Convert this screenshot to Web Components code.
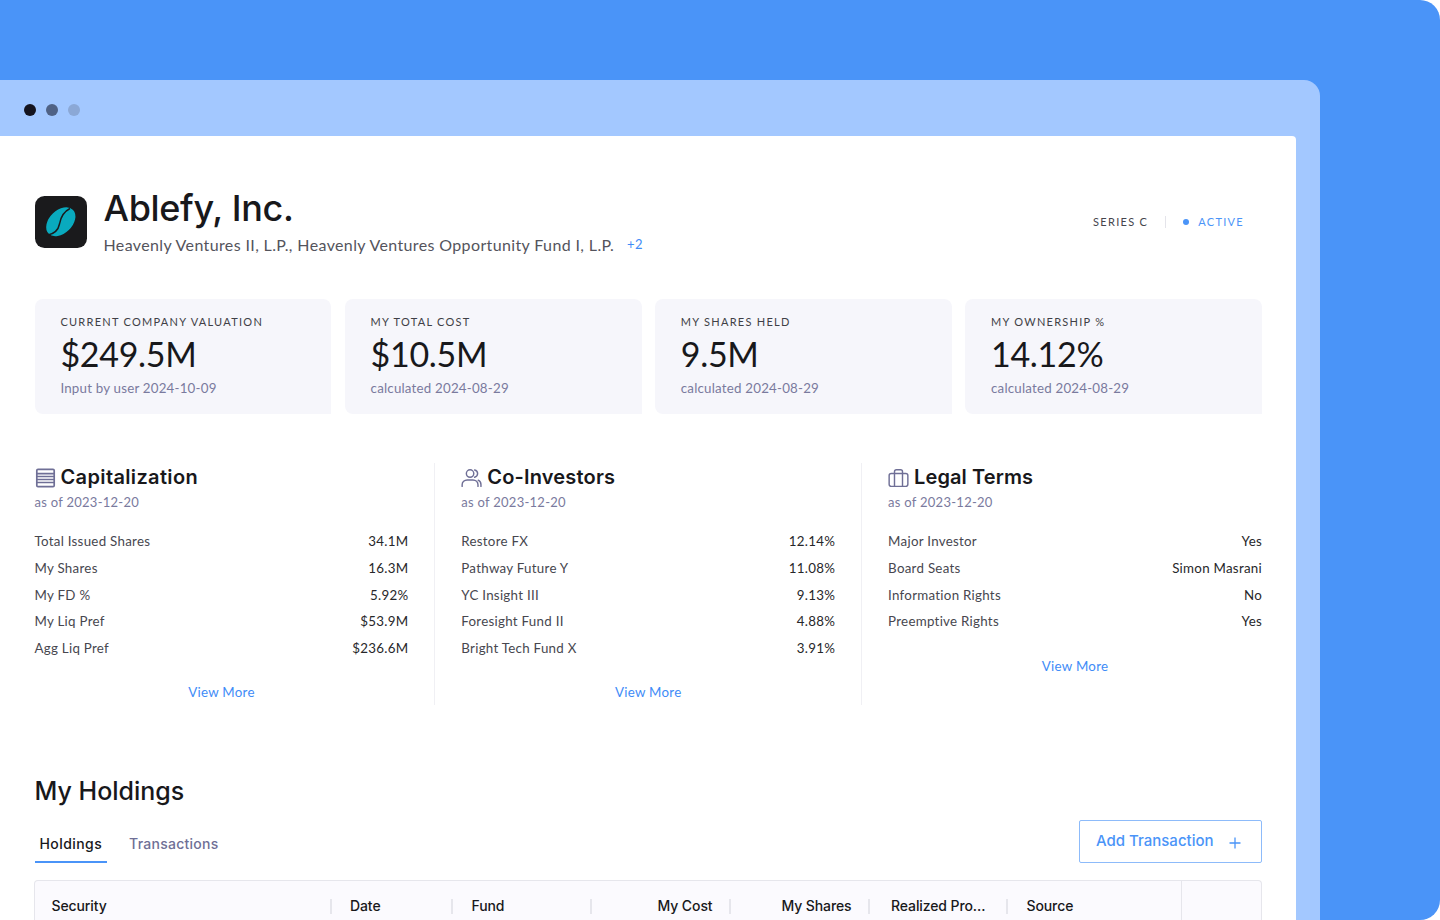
<!DOCTYPE html>
<html lang="en"><head><meta charset="utf-8"><title>Ablefy, Inc.</title>
<style>
html,body{margin:0;padding:0;background:#fff;height:920px;overflow:hidden}
body{font-family:"Lato",sans-serif;color:#18181b}
</style></head><body>
<app-backdrop>
  <window-frame>
    <company-header name="Ablefy, Inc." funds="Heavenly Ventures II, L.P., Heavenly Ventures Opportunity Fund I, L.P." more="+2" series="SERIES C" status="ACTIVE"></company-header>
    <stat-row>
      <stat-card label="CURRENT COMPANY VALUATION" value="$249.5M" note="Input by user 2024-10-09"></stat-card>
      <stat-card label="MY TOTAL COST" value="$10.5M" note="calculated 2024-08-29"></stat-card>
      <stat-card label="MY SHARES HELD" value="9.5M" note="calculated 2024-08-29"></stat-card>
      <stat-card label="MY OWNERSHIP %" value="14.12%" note="calculated 2024-08-29"></stat-card>
    </stat-row>
    <summary-row>
      <summary-panel title="Capitalization" ls=".36" icon="table" rows='[["Total Issued Shares","34.1M"],["My Shares","16.3M"],["My FD %","5.92%"],["My Liq Pref","$53.9M"],["Agg Liq Pref","$236.6M"]]'></summary-panel>
      <summary-panel title="Co-Investors" ls=".17" icon="users" rows='[["Restore FX","12.14%"],["Pathway Future Y","11.08%"],["YC Insight III","9.13%"],["Foresight Fund II","4.88%"],["Bright Tech Fund X","3.91%"]]'></summary-panel>
      <summary-panel title="Legal Terms" ls=".09" icon="case" rows='[["Major Investor","Yes"],["Board Seats","Simon Masrani"],["Information Rights","No"],["Preemptive Rights","Yes"]]'></summary-panel>
    </summary-row>
    <holdings-section></holdings-section>
  </window-frame>
</app-backdrop>
<script>
function def(name, css, html){
  customElements.define(name, class extends HTMLElement{
    constructor(){super();this.attachShadow({mode:'open'});}
    connectedCallback(){
      const a=n=>this.getAttribute(n)||'';
      this.shadowRoot.innerHTML='<style>'+css+'</style>'+(typeof html==='function'?html(a):html);
    }
  });
}
def('app-backdrop',`:host{display:block;width:1440px;height:920px;background:#4A94F8;border-radius:0 20px 20px 0;overflow:hidden;padding-top:80px;box-sizing:border-box}`,`<slot></slot>`);
def('window-frame',`
:host{display:flex;flex-direction:column;width:1320px;height:840px;background:#A3C8FF;border-radius:0 16px 0 0;box-sizing:border-box;overflow:hidden}
.bar{flex:none;height:56px;box-sizing:border-box;padding:4px 0 0 24px;display:flex;align-items:center;gap:10px}
.bar i{width:12px;height:12px;border-radius:50%}
.sheet{flex:1;width:1296px;box-sizing:border-box;background:#fff;border-radius:0 4px 0 0;padding:0 34px 0 34.5px;overflow:hidden}`,
`<div class="bar"><i style="background:#14141f"></i><i style="background:#4F6285"></i><i style="background:#8BA8D6"></i></div><div class="sheet"><slot></slot></div>`);
def('company-header',`
:host{display:flex;align-items:flex-start;height:163px;padding-top:50px;box-sizing:border-box}
svg{flex:none;width:52px;height:52px;margin-top:10px}
.t{margin-left:17px;flex:1}
h1{margin:0;font:500 36px/44px Inter,sans-serif;color:#18181b;letter-spacing:-.35px}
.s{display:flex;align-items:center;font:400 16px/20px Lato,sans-serif;color:#54545c;margin-top:5px;letter-spacing:.37px}
.s b{font-weight:400;font-size:13px;color:#3F8CF7;margin-left:13px;margin-top:-3px}
.tags{display:flex;align-items:center;font:400 11px/14px Lato,sans-serif;letter-spacing:1.3px;margin:29px 18px 0 0;color:#45454d}
.tags u{text-decoration:none;width:1px;height:12px;background:#e4e4ea;margin:0 17px 0 17px}
.tags i{width:6px;height:6px;border-radius:50%;background:#4A94F8;margin-right:9px}
.tags span.a{color:#4A94F8}`,
a=>`<svg viewBox="0 0 52 52"><rect width="52" height="52" rx="9.5" fill="#1a1a1c"/><ellipse cx="25.8" cy="25.8" rx="17" ry="11.5" transform="rotate(-44 25.8 25.8)" fill="#09AABE"/><path d="M13 39C20 37.5 23.5 33 24.5 28C25.5 22 28 16 35 12.5" fill="none" stroke="#1a1a1c" stroke-width="1.5"/></svg>
<div class="t"><h1>${a('name')}</h1><div class="s"><span>${a('funds')}</span><b>${a('more')}</b></div></div>
<div class="tags"><span>${a('series')}</span><u></u><i></i><span class="a">${a('status')}</span></div>`);
def('stat-row',`:host{display:grid;grid-template-columns:repeat(4,1fr);gap:13.33px;width:1227.5px}`,`<slot></slot>`);
def('stat-card',`
:host{display:block;height:115px;box-sizing:border-box;background:#F6F6FB;border-radius:8px 8px 0 8px;padding:16px 25.9px 0}
.l{font:400 11px/14px Lato,sans-serif;letter-spacing:1.27px;color:#3f3f46}
.v{font:400 34px/44px Lato,sans-serif;color:#18181b;margin-top:3px;letter-spacing:-.3px}
.n{font:400 13.33px/18px Lato,sans-serif;color:#7A7A9E;margin-top:3px;letter-spacing:.2px}`,
a=>`<div class="l">${a('label')}</div><div class="v">${a('value')}</div><div class="n">${a('note')}</div>`);
def('summary-row',`:host{display:grid;grid-template-columns:repeat(3,1fr);gap:52.9px;margin-top:49px;width:1227.5px}`,`<slot></slot>`);
const ICONS={
table:`<svg viewBox="0 0 20 20" fill="none" stroke="#6F6F96" stroke-width="1.7"><rect x="1.3" y="1.3" width="17.4" height="17.4" rx="1.2"/><path d="M1.3 5.6h17.4M1.3 8.5h17.4M1.3 11.5h17.4M1.3 14.5h17.4"/></svg>`,
users:`<svg viewBox="0 0 22 20" fill="none" stroke="#6F6F96" stroke-width="1.5" stroke-linecap="round"><circle cx="9.5" cy="5.3" r="3.9"/><path d="M1.2 18.8v-1.6c0-3 2.4-5.2 5.3-5.2h6c2.9 0 5.3 2.2 5.3 5.2v1.6"/><path d="M14.3 1.6c1.8.4 3.1 2 3.1 3.8s-1.3 3.4-3.1 3.8M18 12.3c1.7.7 2.9 2.5 2.9 4.5v2"/></svg>`,
case:`<svg viewBox="0 0 22 20" fill="none" stroke="#6F6F96" stroke-width="1.5"><rect x="1.2" y="5.2" width="19.6" height="13.6" rx="2.2"/><path d="M6.8 18.8V3.4c0-1.2.9-2.1 2-2.1h4.4c1.1 0 2 .9 2 2.1v15.4"/></svg>`};
def('summary-panel',`
:host{display:block;position:relative;height:242px}
:host(:not(:last-child))::after{content:"";position:absolute;left:399.5px;top:0;width:1px;height:242px;background:#f0f0f4}
.h{display:flex;align-items:center;gap:5px;height:26px;padding-top:1px}
.h svg{width:21px;height:20px;flex:none;margin-top:1px}
h2{margin:0;font:600 20px/26px Inter,sans-serif;color:#18181b}
.d{font:400 13px/18px Lato,sans-serif;color:#7A7A9E;margin-top:3px;letter-spacing:.27px}
.rows{margin-top:17.2px}
.r{display:flex;justify-content:space-between;font:400 13.33px/26.67px Lato,sans-serif;letter-spacing:.27px;color:#47474f}
.r b{font-weight:400;color:#27272a}
.m{text-align:center;font:400 13.33px/18px Lato,sans-serif;letter-spacing:.27px;color:#3F8CF7;margin-top:21.7px}`,
a=>{const rows=JSON.parse(a('rows'));return `<div class="h">${ICONS[a('icon')]}<h2 style="letter-spacing:${a('ls')}px">${a('title')}</h2></div><div class="d">as of 2023-12-20</div><div class="rows">${rows.map(r=>`<div class="r"><span>${r[0]}</span><b>${r[1]}</b></div>`).join('')}</div><div class="m">View More</div>`});
def('holdings-section',`
:host{display:block;width:1227.5px;margin-top:70px}
h2{margin:0;font:500 25px/32px Inter,sans-serif;color:#18181b}
.tb{display:flex;align-items:flex-start;justify-content:space-between;margin-top:13px}
.tabs{display:flex;gap:17px;font:500 14px/20px Inter,sans-serif;margin-top:14px}
.tab{padding:0 5px 7px;color:#6F6F96;letter-spacing:.25px}
.tab.on{color:#18181b;border-bottom:2px solid #4A94F8;letter-spacing:.42px}
.btn{display:flex;align-items:center;box-sizing:border-box;width:183px;height:43px;border:1.5px solid #8DBBFA;border-radius:2px;padding:0 0 2px 16px;font:500 15px/20px Inter,sans-serif;color:#4A94F8}
.btn svg{width:12px;height:12px;margin-left:15.5px;margin-top:4px}
.tbl{display:flex;margin:17px 0 0 -1px;height:60px;box-sizing:border-box;border:1.5px solid #E6E6EC;border-bottom:0;border-radius:4px 4px 0 0;background:#FBFAFE;font:500 14px/20px Inter,sans-serif;color:#18181b;letter-spacing:-.1px}
.c{box-sizing:border-box;padding:14.5px 0 0 17px;position:relative;height:40px;flex:none}
.c::after{content:"";position:absolute;right:0;top:18px;width:2px;height:15px;background:#E6E6EC}
.c.n::after{display:none}
.c.rt{text-align:right;padding:14.5px 18px 0 0}
.end{flex:1;border-left:1.5px solid #E6E6EC}`,
`<h2>My Holdings</h2>
<div class="tb"><div class="tabs"><div class="tab on">Holdings</div><div class="tab">Transactions</div></div>
<div class="btn">Add Transaction<svg viewBox="0 0 12 12" fill="none" stroke="#4A94F8" stroke-width="1.3"><path d="M6 .5v11M.5 6h11"/></svg></div></div>
<div class="tbl">
<div class="c" style="width:297.5px">Security</div>
<div class="c" style="width:121px;padding-left:18px">Date</div>
<div class="c" style="width:138.5px;padding-left:18.5px">Fund</div>
<div class="c rt" style="width:139px">My Cost</div>
<div class="c rt" style="width:139px">My Shares</div>
<div class="c" style="width:138px;padding-left:21.5px">Realized Pro...</div>
<div class="c n" style="width:173.5px;padding-left:19px">Source</div>
<div class="end"></div></div>`);
</script>
</body></html>
